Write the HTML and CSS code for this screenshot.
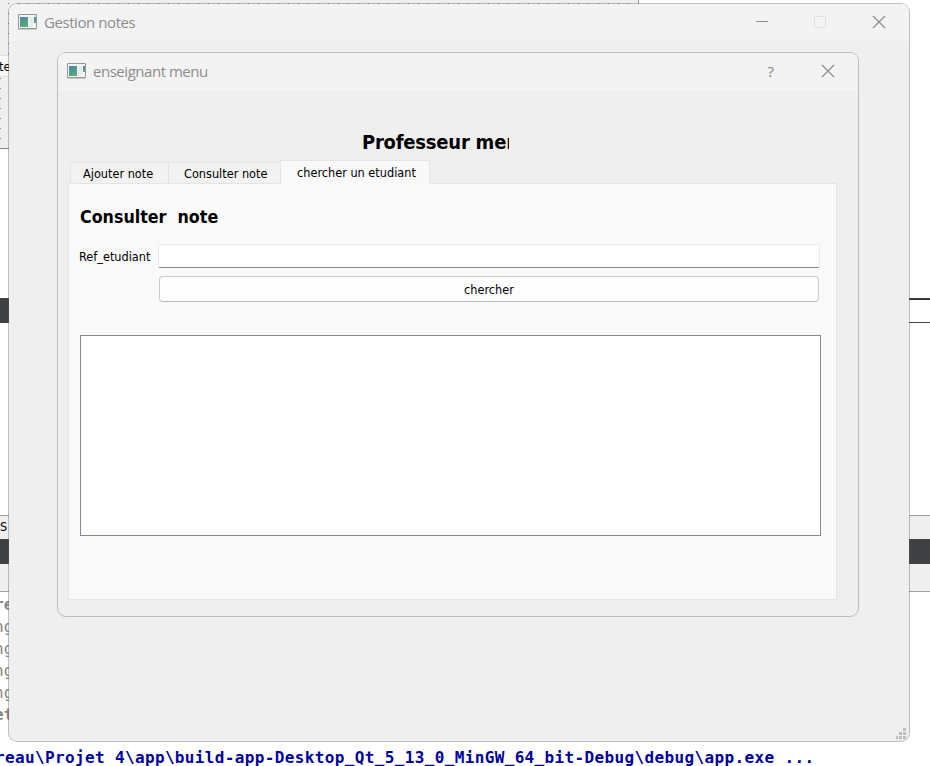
FILE: index.html
```
<!DOCTYPE html>
<html lang="fr">
<head>
<meta charset="utf-8">
<title>Gestion notes</title>
<link rel="stylesheet" href="styles.css">
</head>
<body>
<div class="desktop">
  <div class="designer">
    <div class="form-grid"></div>
    <div class="designer-row"><span>te</span></div>
    <div class="form-grid lower"></div>
  </div>
  <div class="dark-left"></div>
  <div class="editor-line"></div>
  <div class="dock">
    <div class="dock-tab">S</div>
    <div class="dock-dark"></div>
    <div class="dock-foot"></div>
  </div>
  <div class="log">
    <div class="strong">re</div>
    <div>ng</div>
    <div>ng</div>
    <div>ng</div>
    <div>ng</div>
    <div class="strong">et</div>
  </div>
  <div class="command">reau\Projet 4\app\build-app-Desktop_Qt_5_13_0_MinGW_64_bit-Debug\debug\app.exe ...</div>

  <section class="window main-window">
    <header class="titlebar">
      <svg class="app-icon" width="19" height="16" viewBox="0 0 19 16"><defs><linearGradient id="g" x1="0" y1="0" x2="0.4" y2="1"><stop offset="0" stop-color="#4e80aa"/><stop offset="1" stop-color="#55ad78"/></linearGradient></defs><path d="M.5.5h18v14H.5z" fill="#f5f5f5" stroke="#92989e"/><path d="M0 15.5h19" stroke="#c8c8c8"/><path d="M2 3h8v10H2z" fill="url(#g)"/><path d="M11 3h4v10h-4z" fill="#e9e9e9"/><path d="M16 3h2v6h-2z" fill="url(#g)"/></svg>
      <h1 class="title">Gestion notes</h1>
      <svg class="controls" width="131" height="14" viewBox="0 0 131 14" fill="none" stroke="#8c8c8c"><path d="M0 6.5h12"/><rect x="58.5" y="1.5" width="11" height="11" rx="1" stroke="#dedede"/><path d="M117 1l12 12M129 1l-12 12" stroke-width="1.2"/></svg>
    </header>
    <svg class="grip" width="10" height="11" viewBox="0 0 10 11" fill="#bdbdbd"><path d="M7 0h3v3H7zM3 4h3v3H3zM7 4h3v3H7zM0 8h2v3H0zM3 8h3v3H3zM7 8h3v3H7z"/></svg>
  </section>

  <section class="window dialog">
    <header class="titlebar">
      <svg class="app-icon" width="19" height="16" viewBox="0 0 19 16"><path d="M.5.5h18v14H.5z" fill="#f5f5f5" stroke="#92989e"/><path d="M0 15.5h19" stroke="#c8c8c8"/><path d="M2 3h8v10H2z" fill="url(#g)"/><path d="M11 3h4v10h-4z" fill="#e9e9e9"/><path d="M16 3h2v6h-2z" fill="url(#g)"/></svg>
      <h2 class="title">enseignant menu</h2>
      <span class="help">?</span>
      <svg class="close" width="14" height="14" viewBox="0 0 14 14" fill="none" stroke="#8c8c8c" stroke-width="1.2"><path d="M1 1l12 12M13 1L1 13"/></svg>
    </header>
    <div class="dialog-body">
      <h3 class="heading">Professeur menu</h3>
      <nav class="tabs">
        <div class="tab first">Ajouter note</div>
        <div class="tab second">Consulter note</div>
        <div class="tab active">chercher un etudiant</div>
      </nav>
      <div class="panel">
        <h4 class="subheading">Consulter&nbsp; note</h4>
        <div class="form">
          <label class="label" for="ref">Ref_etudiant</label>
          <input class="input" id="ref" type="text">
          <button class="button" type="button">chercher</button>
        </div>
        <div class="results"></div>
      </div>
    </div>
  </section>
</div>
</body>
</html>
```

FILE: styles.css
```
* { box-sizing: border-box; }

body {
  margin: 0;
  background: #fff;
  color: #000;
  font: 12.6px/16px "DejaVu Sans Condensed", "DejaVu Sans", sans-serif;
  font-stretch: condensed;
}

h1, h2, h3, h4 { margin: 0; font-weight: normal; }

.desktop {
  position: relative;
  width: 930px;
  height: 766px;
  overflow: hidden;
}

/* Windows behind the application */
.designer {
  position: absolute;
  left: 0;
  top: 0;
  width: 639px;
  height: 149px;
  background: #efefef;
  border-right: 1px solid #999;
  border-bottom: 1px solid #7f858d;
}

.form-grid {
  height: 55px;
  background: repeating-linear-gradient(90deg, #efefef 0 8px, transparent 8px 9px, #efefef 9px 10px),
    repeating-linear-gradient(#efefef 0 3px, #777 3px 4px, #efefef 4px 10px);
}

.form-grid.lower {
  height: 71px;
  background: repeating-linear-gradient(90deg, transparent 0 1px, #efefef 1px 10px),
    repeating-linear-gradient(#efefef 0 1px, #888 1px 2px, #efefef 2px 10px);
}

.designer-row {
  height: 22px;
  background: #f8f8f8;
  border-top: 1px solid #e2e2e2;
  border-bottom: 1px solid #e2e2e2;
  line-height: 22px;
}

.designer-row span { margin-left: -1px; }

.dark-left {
  position: absolute;
  left: 0;
  top: 298px;
  width: 20px;
  height: 25px;
  background: #404143;
}

.editor-line {
  position: absolute;
  left: 900px;
  top: 298px;
  width: 30px;
  height: 25px;
  border-top: 2px solid #38383a;
  border-bottom: 1px solid #404143;
}

.dock {
  position: absolute;
  left: 0;
  top: 515px;
  width: 930px;
  height: 77px;
  background: #efefef;
  border-top: 1px solid #9e9e9e;
  border-bottom: 1px solid #9e9e9e;
}

.dock-tab { height: 23px; line-height: 22px; }
.dock-dark { height: 25px; background: #404143; }

.log {
  position: absolute;
  left: -6px;
  top: 594px;
  color: #858585;
  font: 16px/22px "DejaVu Sans Mono", monospace;
}

.strong { font-weight: bold; }

.command {
  position: absolute;
  left: -5px;
  top: 747px;
  color: #00009b;
  font: bold 16px/22px "DejaVu Sans Mono", monospace;
  letter-spacing: .36px;
  white-space: pre;
}

/* Application windows */
.window {
  position: absolute;
  overflow: hidden;
  background: #efefef;
  background-clip: padding-box;
  border: 1px solid rgba(90, 90, 90, .38);
  border-radius: 9px;
}

.main-window { left: 8px; top: 3px; width: 902px; height: 739px; }
.dialog { left: 57px; top: 52px; width: 802px; height: 565px; border-color: #bdbdbd; }

.titlebar {
  display: flex;
  align-items: center;
  height: 37px;
  padding: 0 0 1px 9px;
  background: #f3f3f3;
}

.title {
  margin-left: 7px;
  color: #8c8c8c;
  font: 15px/20px "Open Sans", "Noto Sans", sans-serif;
  letter-spacing: -.47px;
}

.main-window .title { letter-spacing: -.43px; }

.controls { margin-left: auto; margin-right: 22px; }

.help {
  margin-left: auto;
  margin-right: 47px;
  color: #858585;
  font: 15px/20px "Open Sans", sans-serif;
}

.close { margin-right: 23px; }

.grip { position: absolute; right: 3px; bottom: 2px; }

.dialog-body { padding: 38px 21px 16px 10px; }

.heading {
  width: 147px;
  height: 32px;
  margin-left: 294px;
  overflow: hidden;
  white-space: nowrap;
  font-size: 20px;
  font-weight: bold;
  line-height: 28px;
  letter-spacing: -.22px;
}

.tabs {
  display: flex;
  align-items: flex-end;
  height: 23px;
  padding-left: 2px;
}

.tab {
  height: 21px;
  border: 1px solid #e4e4e4;
  border-bottom: 0;
  background: #f2f2f2;
  line-height: 22px;
  white-space: nowrap;
}

.first { width: 99px; padding-left: 12px; }
.second { width: 112px; padding-left: 15px; border-left: 0; }

.active {
  position: relative;
  z-index: 1;
  width: 150px;
  height: 24px;
  margin-left: -1px;
  margin-bottom: -1px;
  padding-left: 16px;
  line-height: 24px;
  background: #f9f9f9;
}

.panel {
  width: 769px;
  height: 417px;
  padding: 22px 15px 0 11px;
  border: 1px solid #e4e4e4;
  background: #f9f9f9;
}

.subheading {
  height: 38px;
  font-size: 17.7px;
  font-weight: bold;
  line-height: 22px;
}

.form {
  display: grid;
  grid-template-columns: 78px 662px;
  row-gap: 8px;
}

.label { height: 24px; margin-left: -1px; line-height: 25px; white-space: nowrap; }

.input {
  width: 662px;
  height: 24px;
  border: 1px solid #e8e8e8;
  border-bottom-color: #868686;
  border-radius: 2px;
  background: #fff;
}

.button {
  grid-column: 2;
  width: 660px;
  height: 26px;
  margin-left: 1px;
  padding: 2px 0 0;
  border: 1px solid #cbcbcb;
  border-bottom-color: #b9b9b9;
  border-radius: 4px;
  background: #fdfdfd;
  color: #000;
  font: inherit;
}

.results {
  width: 741px;
  height: 201px;
  margin-top: 33px;
  border: 1px solid #828790;
  background: #fff;
}
```
